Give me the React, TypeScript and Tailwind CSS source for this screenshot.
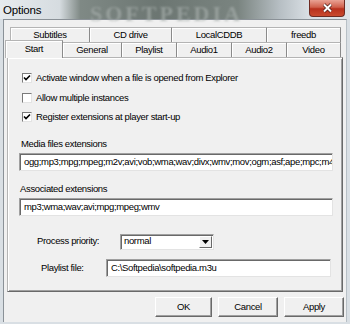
import React from 'react';

const rowOne = [
    { label: 'Subtitles', w: 80 },
    { label: 'CD drive', w: 82 },
    { label: 'LocalCDDB', w: 95 },
    { label: 'freedb', w: 74 },
];

const rowTwo = [
    { label: 'Start', w: 58, active: true },
    { label: 'General', w: 59 },
    { label: 'Playlist', w: 55 },
    { label: 'Audio1', w: 55 },
    { label: 'Audio2', w: 55 },
    { label: 'Video', w: 54 },
];

function Check({ checked, label }: { checked: boolean; label: string }) {
    return (
        <div className="flex items-center h-[14px] pl-[2px]">
            <div className="w-[10px] h-[10px] bg-white border-t border-l border-[#7a7a7a] border-r border-b border-r-[#e3e3e3] border-b-[#e3e3e3] flex items-center justify-center">
                {checked && (
                    <svg width="8" height="8" viewBox="0 0 8 8">
                        <path d="M1 3.5 L3 5.5 L7 1.5" stroke="#000" strokeWidth="1.6" fill="none" />
                    </svg>
                )}
            </div>
            <span className="ml-[4px]">{label}</span>
        </div>
    );
}

function Field({ value, className }: { value: string; className: string }) {
    return (
        <div className={`bg-white border-t border-l border-[#a0a0a0] border-r border-b border-r-[#e3e3e3] border-b-[#e3e3e3] shadow-[inset_1px_1px_0_#696969] flex items-center pl-[4px] overflow-hidden whitespace-nowrap ${className}`}>
            {value}
        </div>
    );
}

function Button({ label, w }: { label: string; w: number }) {
    return (
        <div
            className="h-[20px] bg-[#f0f0f0] border-t border-l border-white border-r border-b border-r-[#696969] border-b-[#696969] shadow-[inset_-1px_-1px_0_#a0a0a0] flex items-center justify-center"
            style={{ width: w }}
        >
            {label}
        </div>
    );
}

export default function App() {
    return (
        <div className="w-[350px] h-[324px] bg-[#d9dfe4] font-['Liberation_Sans',Arial,sans-serif] text-[9.5px] tracking-[-0.35px] text-black relative overflow-hidden">
            {/* Title bar */}
            <div className="h-[19px] relative bg-[linear-gradient(90deg,#e6ebee_0%,#d6dce0_17%,#7f8985_23%,#6c7672_45%,#7a8480_68%,#b7bfc4_80%,#d8dee3_88%,#dfe4e8_100%)]">
                <span className="absolute left-[90px] top-[-3px] text-[22px] font-bold font-['Liberation_Serif',serif] tracking-[3px] text-[#a3aba8] opacity-70 blur-[1px]">SOFTPEDIA</span>
                <span className="absolute left-[3px] top-[2px] text-[11.5px] tracking-[-0.2px] text-black">Options</span>
                <div className="absolute right-[5px] top-0 w-[36px] h-[17px] rounded-b-[4px] border border-t-0 border-[#6e2b22] bg-[linear-gradient(#e9a294,#d0604c_45%,#b8301d_55%,#c94a2e)] flex items-center justify-center">
                    <svg width="11" height="10" viewBox="0 0 11 10">
                        <path d="M2 1.5 L9 8.5 M9 1.5 L2 8.5" stroke="#4a1a14" strokeWidth="3.4" />
                        <path d="M2 1.5 L9 8.5 M9 1.5 L2 8.5" stroke="#fff" strokeWidth="2" />
                    </svg>
                </div>
            </div>

            {/* Client area */}
            <div className="mx-[3px] h-[303px] bg-[#f0f0f0] border-t border-l border-[#8a9197] border-r border-r-[#b8c0c6] pt-[7px] flex flex-col">
                {/* Tab row 1 */}
                <div className="flex ml-[6px] h-[15px]">
                    {rowOne.map((t, i) => (
                        <div
                            key={t.label}
                            className={`h-[15px] flex items-center justify-center border-t border-[#b4b4b4] border-r border-r-[#8a8a8a] shadow-[inset_1px_1px_0_#fff] ${i === 0 ? 'border-l border-l-[#b4b4b4]' : ''}`}
                            style={{ width: t.w }}
                        >
                            {t.label}
                        </div>
                    ))}
                </div>
                {/* Tab row 2 */}
                <div className="flex items-end ml-[1px] h-[17px] -mt-[2px] relative z-10">
                    {rowTwo.map((t) =>
                        t.active ? (
                            <div
                                key={t.label}
                                className="h-[18px] -mb-[1px] bg-[#f0f0f0] flex items-center justify-center border-t border-l border-[#b4b4b4] border-r border-r-[#8a8a8a] shadow-[inset_1px_1px_0_#fff] pb-[1px]"
                                style={{ width: t.w }}
                            >
                                {t.label}
                            </div>
                        ) : (
                            <div
                                key={t.label}
                                className="h-[15px] flex items-center justify-center border-t border-[#b4b4b4] border-r border-r-[#8a8a8a] shadow-[inset_1px_1px_0_#fff]"
                                style={{ width: t.w }}
                            >
                                {t.label}
                            </div>
                        )
                    )}
                </div>

                {/* Tab panel */}
                <div className="ml-[3px] w-[336px] h-[235px] border-t border-l border-[#b4b4b4] border-r border-b border-r-[#696969] border-b-[#696969] shadow-[inset_1px_1px_0_#fff,inset_-1px_-1px_0_#a0a0a0] flex flex-col pl-[11px]">
                    <div className="mt-[13px] pl-[1px]">
                        <Check checked label="Activate window when a file is opened from Explorer" />
                    </div>
                    <div className="mt-[6px] pl-[1px]">
                        <Check checked={false} label="Allow multiple instances" />
                    </div>
                    <div className="mt-[5px] pl-[1px]">
                        <Check checked label="Register extensions at player start-up" />
                    </div>

                    <div className="mt-[14px] h-[12px] leading-[12px] pl-[2px]">Media files extensions</div>
                    <Field
                        className="mt-[3px] w-[314px] h-[18px]"
                        value="ogg;mp3;mpg;mpeg;m2v;avi;vob;wma;wav;divx;wmv;mov;ogm;asf;ape;mpc;m4a;aac;flac"
                    />

                    <div className="mt-[12px] h-[12px] leading-[12px] pl-[1px]">Associated extensions</div>
                    <Field className="mt-[3px] w-[314px] h-[18px]" value="mp3;wma;wav;avi;mpg;mpeg;wmv" />

                    <div className="mt-[17px] flex items-center h-[17px]">
                        <span className="ml-[18px] w-[83px]">Process priority:</span>
                        <div className="w-[94px] h-[16px] bg-white border-t border-l border-[#a0a0a0] border-r border-b border-r-[#e3e3e3] border-b-[#e3e3e3] shadow-[inset_1px_1px_0_#696969] flex items-center">
                            <span className="flex-1 pl-[3px]">normal</span>
                            <div className="w-[13px] h-[12px] mr-[1px] bg-[#f0f0f0] border-t border-l border-white border-r border-b border-r-[#696969] border-b-[#696969] flex items-center justify-center">
                                <svg width="7" height="4" viewBox="0 0 7 4">
                                    <path d="M0 0 H7 L3.5 4 Z" fill="#000" />
                                </svg>
                            </div>
                        </div>
                    </div>

                    <div className="mt-[9px] flex items-center h-[18px]">
                        <span className="ml-[22px] w-[65px]">Playlist file:</span>
                        <Field className="w-[225px] h-[18px]" value="C:\Softpedia\softpedia.m3u" />
                    </div>
                </div>

                {/* Buttons */}
                <div className="mt-[5px] flex justify-end gap-[6px] pr-[2px]">
                    <Button label="OK" w={57} />
                    <Button label="Cancel" w={60} />
                    <Button label="Apply" w={60} />
                </div>
            </div>
        </div>
    );
}
